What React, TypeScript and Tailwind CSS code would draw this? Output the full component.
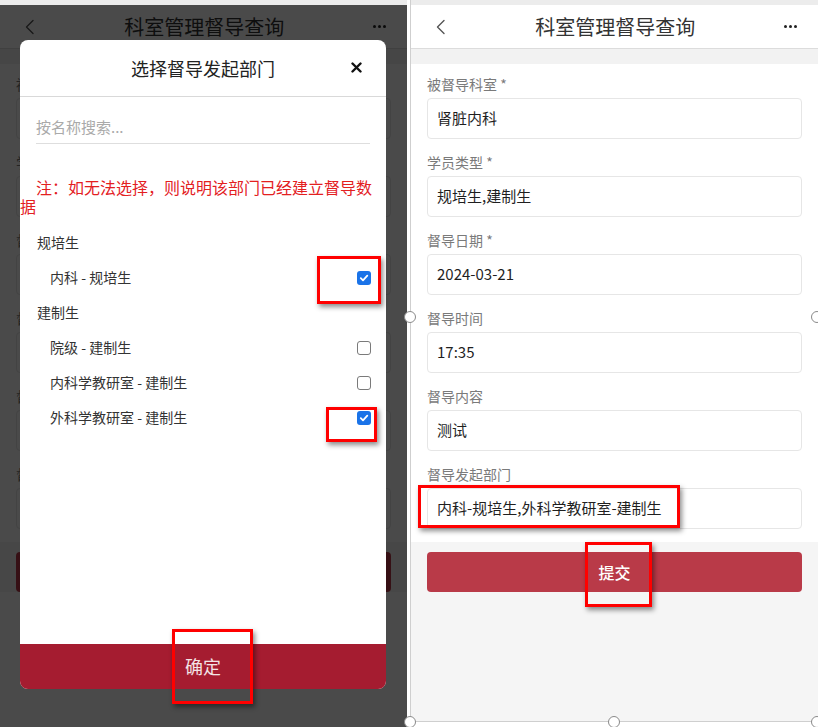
import React from "react";

type Field = { label: string; required?: boolean; value: string };

const fields: Field[] = [
  { label: "被督导科室", required: true, value: "肾脏内科" },
  { label: "学员类型", required: true, value: "规培生,建制生" },
  { label: "督导日期", required: true, value: "2024-03-21" },
  { label: "督导时间", value: "17:35" },
  { label: "督导内容", value: "测试" },
  { label: "督导发起部门", value: "内科-规培生,外科学教研室-建制生" },
];

const groups = [
  {
    name: "规培生",
    items: [{ name: "内科 - 规培生", checked: true }],
  },
  {
    name: "建制生",
    items: [
      { name: "院级 - 建制生", checked: false },
      { name: "内科学教研室 - 建制生", checked: false },
      { name: "外科学教研室 - 建制生", checked: true },
    ],
  },
];

function NavBar() {
  return (
    <div className="flex h-[44px] items-center justify-between border-b border-[#dcdcdc] bg-white pl-[24px] pr-[21px]">
      <svg width="12" height="16" viewBox="0 0 12 16" fill="none">
        <path d="M9 1.5L2.5 8L9 14.5" stroke="#555" strokeWidth="1.4" strokeLinecap="round" strokeLinejoin="round" />
      </svg>
      <div className="text-[20px] leading-none text-[#333]">科室管理督导查询</div>
      <div className="flex gap-[1.5px]">
        <span className="h-[3.5px] w-[3.5px] rounded-full bg-[#222]" />
        <span className="h-[3.5px] w-[3.5px] rounded-full bg-[#222]" />
        <span className="h-[3.5px] w-[3.5px] rounded-full bg-[#222]" />
      </div>
    </div>
  );
}

function SupervisionForm() {
  return (
    <div className="flex h-full flex-col">
      <NavBar />
      <div className="h-[15px] bg-[#f2f2f2]" />
      <div className="flex flex-col gap-[13px] bg-white px-4 pb-[13px] pt-[10px]">
        {fields.map((f) => (
          <div key={f.label} className="flex flex-col">
            <div className="mb-1 h-5 text-[14px] leading-5 text-[#7a7a7a]">
              {f.label}
              {f.required && " *"}
            </div>
            <div className="flex h-[41px] items-center rounded border border-[#e6e6e6] px-[9px] text-[15px] text-[#1f1f1f]">
              {f.value}
            </div>
          </div>
        ))}
      </div>
      <div className="flex-1 bg-[#f5f5f5] px-4 pt-[10px]">
        <div className="flex h-10 items-center justify-center rounded bg-[#b93a48] text-[16px] font-medium text-white">
          提交
        </div>
      </div>
    </div>
  );
}

function Checkbox({ checked }: { checked: boolean }) {
  if (checked) {
    return (
      <span className="flex h-[14px] w-[14px] items-center justify-center rounded-[3px] bg-[#1a73e8]">
        <svg width="10" height="10" viewBox="0 0 10 10" fill="none">
          <path d="M1.8 5.2L4 7.3L8.3 2.6" stroke="white" strokeWidth="1.8" strokeLinecap="round" strokeLinejoin="round" />
        </svg>
      </span>
    );
  }
  return <span className="h-[14px] w-[14px] rounded-[3px] border border-[#7a7a7a] bg-white" />;
}

function DeptPicker() {
  return (
    <div className="absolute left-[20px] top-[35px] flex h-[649px] w-[366px] flex-col overflow-hidden rounded-lg bg-white">
      <div className="relative flex h-[57px] items-center justify-center border-b border-[#d9d9d9]">
        <span className="text-[18px] text-[#222]">选择督导发起部门</span>
        <svg width="11" height="11" viewBox="0 0 11 11" className="absolute right-[24px] top-[22px]">
          <path d="M1.5 1.5L9.5 9.5M9.5 1.5L1.5 9.5" stroke="#111" strokeWidth="2.4" strokeLinecap="round" />
        </svg>
      </div>
      <div className="flex-1">
        <div className="mx-4 mt-[14px] flex h-[33px] items-center border-b border-[#dedede] text-[15px] text-[#aaa]">
          按名称搜索...
        </div>
        <div className="mt-[34px] pr-2 indent-[16px] text-[16px] leading-[19px] text-[#e3201f]">
          注：如无法选择，则说明该部门已经建立督导数据
        </div>
        <div className="mt-[9px]">
          {groups.map((g) => (
            <div key={g.name}>
              <div className="flex h-[35px] items-center pl-[17px] text-[14px] text-[#333]">{g.name}</div>
              {g.items.map((it) => (
                <div key={it.name} className="flex h-[35px] items-center justify-between pl-[30px] pr-[15px] text-[14px] text-[#333]">
                  <span>{it.name}</span>
                  <Checkbox checked={it.checked} />
                </div>
              ))}
            </div>
          ))}
        </div>
      </div>
      <div className="flex h-[45px] items-center justify-center bg-[#a51c30] text-[18px] text-[#f3e3e5]">
        确定
      </div>
    </div>
  );
}

// red callouts drawn over the screenshots
const marks = [
  { id: "m1", cls: "left-[317px] top-[256px] h-[48px] w-[64px]" },
  { id: "m2", cls: "left-[326px] top-[407px] h-[35px] w-[51px]" },
  { id: "m3", cls: "left-[172px] top-[629px] h-[75px] w-[81px]" },
  { id: "m4", cls: "left-[418px] top-[485px] h-[43px] w-[262px]" },
  { id: "m5", cls: "left-[585px] top-[542px] h-[65px] w-[67px]" },
];

const handles = [
  "left-[404px] top-[311px]",
  "left-[811px] top-[311px]",
  "left-[404px] top-[716px]",
  "left-[608px] top-[716px]",
  "left-[811px] top-[716px]",
];

export default function App() {
  return (
    <div className="relative flex h-[727px] w-[818px] overflow-hidden bg-white font-['Noto_Sans_CJK_SC','Noto_Sans',sans-serif]">
      <div className="flex h-[727px] w-[407px] flex-col">
        <div className="h-[5px] bg-[#ececec]" />
        <div className="relative flex-1">
          <div aria-hidden="true">
            <SupervisionForm />
          </div>
          <div className="absolute inset-0 bg-black/[0.71]" />
          <DeptPicker />
        </div>
      </div>
      <div className="ml-[3px] flex h-[722px] w-[408px] flex-col border-b border-l border-[#cfcfcf]">
        <div className="h-[5px] bg-[#ececec]" />
        <div className="flex-1">
          <SupervisionForm />
        </div>
      </div>

      {marks.map((m) => (
        <div
          key={m.id}
          className={`absolute border-[3px] border-[#ff0000] shadow-[2px_3px_5px_rgba(0,0,0,0.45)] ${m.cls}`}
        />
      ))}
      {handles.map((h) => (
        <div key={h} className={`absolute h-3 w-3 rounded-full border border-[#8a8a8a] bg-white ${h}`} />
      ))}
    </div>
  );
}
